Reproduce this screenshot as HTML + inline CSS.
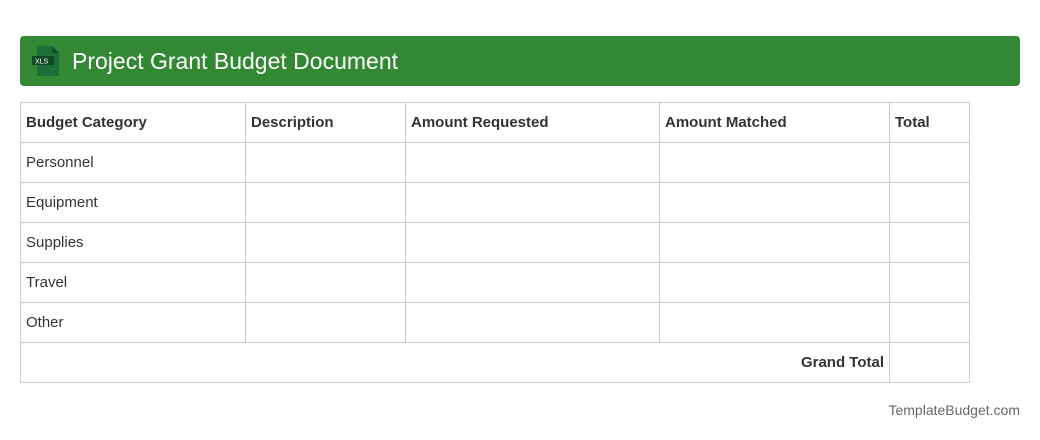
<!DOCTYPE html>
<html><head><style>
body{margin:0;width:1040px;height:440px;background:#fff;font-family:"Liberation Sans",sans-serif;position:relative;overflow:hidden}
.hdr{position:absolute;left:20px;top:36px;width:1000px;height:50px;background:#338833;border-radius:4px}
.hdr .t{position:absolute;left:52px;top:12px;font-size:23px;color:#fff}
table{position:absolute;left:20px;top:102px;border-collapse:collapse;font-size:15px;color:#333;table-layout:fixed}
td{border:1px solid #ccc;height:40px;padding:0 5px;box-sizing:border-box}
.h td{font-weight:bold}
.f{position:absolute;right:20px;top:402px;font-size:14px;color:#666}
</style></head><body>
<div class="hdr">
<svg style="position:absolute;left:12px;top:10px" width="30" height="30" viewBox="0 0 30 30">
<path d="M5 0h15l7 7v23H5z" fill="#1e6e3a"/><path d="M20 0l7 7h-7z" fill="#114d27"/>
<rect x="0" y="10" width="22" height="9" fill="#0f4a25"/>
<text x="3" y="17.5" font-size="7" fill="#fff" font-family="Liberation Sans">XLS</text></svg>
<div class="t">Project Grant Budget Document</div></div>
<table style="width:949px">
<tr class="h"><td style="width:225px">Budget Category</td><td style="width:160px">Description</td><td style="width:254px">Amount Requested</td><td style="width:230px">Amount Matched</td><td style="width:80px">Total</td></tr>
<tr><td>Personnel</td><td></td><td></td><td></td><td></td></tr>
<tr><td>Equipment</td><td></td><td></td><td></td><td></td></tr>
<tr><td>Supplies</td><td></td><td></td><td></td><td></td></tr>
<tr><td>Travel</td><td></td><td></td><td></td><td></td></tr>
<tr><td>Other</td><td></td><td></td><td></td><td></td></tr>
<tr><td colspan="4" style="text-align:right;font-weight:bold">Grand Total</td><td></td></tr>
</table>
<div class="f">TemplateBudget.com</div>
</body></html>
